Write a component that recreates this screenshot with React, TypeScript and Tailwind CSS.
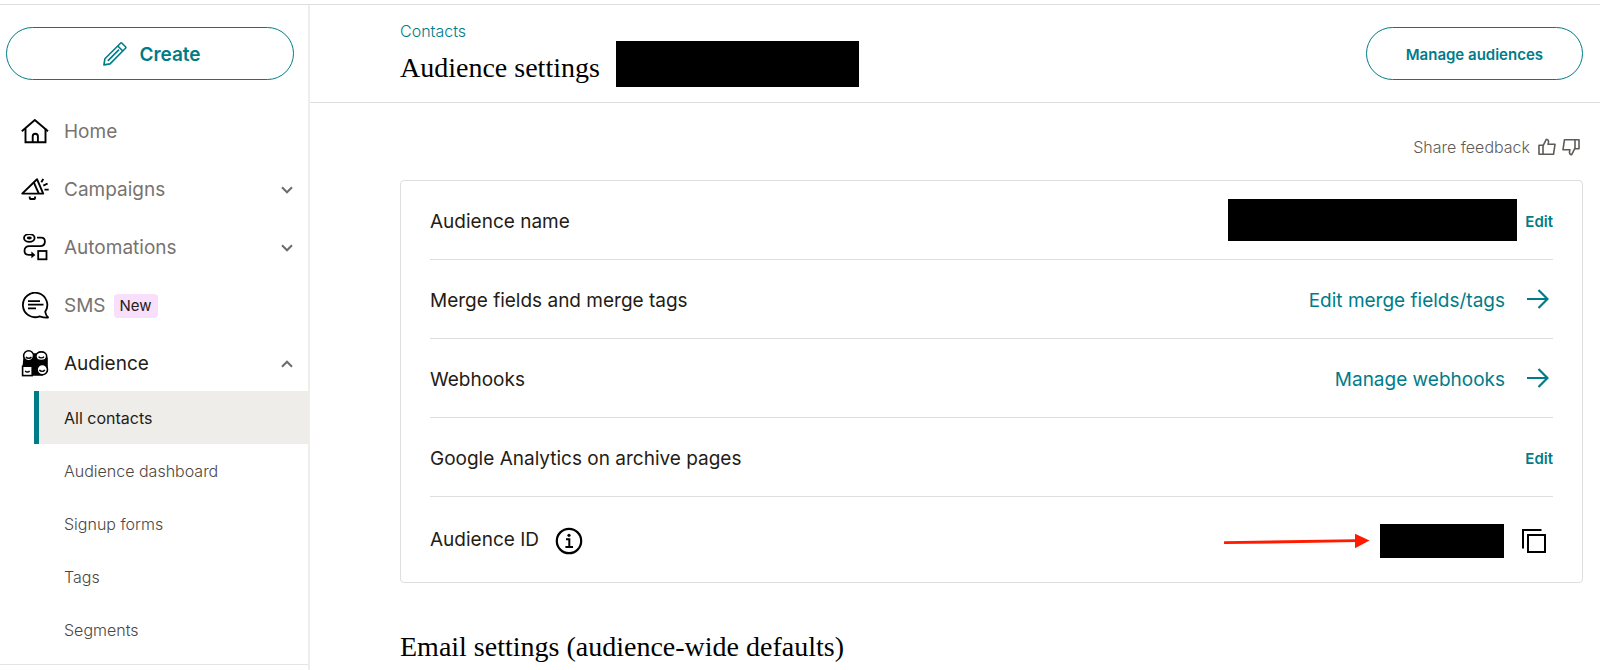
import React from 'react';

interface IconProps {
    className?: string;
}

const HomeIcon: React.FC<IconProps> = ({ className }) => (
    <svg viewBox="0 0 28 28" className={className} fill="none" stroke="currentColor" strokeWidth="1.9" aria-hidden="true">
        <path d="M.8 13.2 13.8 2l13.2 11.2" strokeLinejoin="round" />
        <path d="M4.5 10.5v13.8h20V10.5" />
        <path d="M11.7 24.3v-6a2.6 2.6 0 0 1 5.2 0v6" />
    </svg>
);

const CampaignsIcon: React.FC<IconProps> = ({ className }) => (
    <svg viewBox="0 0 28 28" className={className} fill="none" stroke="currentColor" strokeWidth="1.9" strokeLinejoin="round" aria-hidden="true">
        <path d="M1.2 17.6 16 3.2l6.2 14.4z" />
        <path d="m12.8 6.4 5 11.2" />
        <path d="M8.7 20.4v1a1.6 1.6 0 0 0 1.6 1.6h2.2a1.6 1.6 0 0 0 1.6-1.6v-1" />
        <path d="m20.3 6.2 2-3.2M22.3 9.7l4.3-2.2M23.5 13.6h4.2" />
    </svg>
);

const AutomationsIcon: React.FC<IconProps> = ({ className }) => (
    <svg viewBox="0 0 28 28" className={className} fill="none" stroke="currentColor" strokeWidth="1.8" aria-hidden="true">
        <ellipse cx="8.3" cy="4" rx="5.3" ry="3.9" />
        <ellipse cx="8.3" cy="4" rx="1.6" ry=".5" />
        <path d="M16 3.6h4.2c2.4 0 3.7 1.6 3.7 4 0 3-1.6 4.6-5 4.6H8.4c-3.2 0-4.9 1.8-4.9 4.5s1.6 4.2 4.3 4.2H11" />
        <path d="m10.4 17.6 4 3.3-4 3.3z" fill="currentColor" stroke="none" />
        <rect x="17.2" y="17" width="8.3" height="8.3" />
    </svg>
);

const SmsIcon: React.FC<IconProps> = ({ className }) => (
    <svg viewBox="0 0 28 28" className={className} fill="none" stroke="currentColor" strokeWidth="1.8" strokeLinejoin="round" aria-hidden="true">
        <path d="M24.2 19.8A12.2 12.2 0 1 0 18.6 24.3c2.8.9 5.4 1.4 8.5 1.2-1.6-1.5-2.5-3.4-2.9-5.7z" />
        <path d="M7 9.2h12M7 12.7h15.5M7 16.4h8" />
    </svg>
);

const AudienceIcon: React.FC<IconProps> = ({ className }) => (
    <svg viewBox="0 0 28 28" className={className} fill="none" stroke="currentColor" strokeWidth="1.6" aria-hidden="true">
        <path d="M3 9 8 4h14l4 4v13l-5 4H8l-6-4z" fill="currentColor" />
        <circle cx="7.6" cy="5.8" r="5" fill="white" />
        <ellipse cx="20.3" cy="6.2" rx="5.4" ry="4.3" fill="white" />
        <rect x="1.6" y="16.2" width="9.6" height="9.4" fill="white" />
        <circle cx="21.3" cy="19.6" r="5.2" fill="white" />
        <path d="M5 6.8c1.2 2 4.2 2 5.4 0M17.6 6.6c1.2 1.7 4.2 1.7 5.4 0M4.2 20.8c1 1.6 3.4 1.6 4.4 0M18.4 19.9c1.2 2 4.2 2 5.4 0" strokeWidth="1.4" />
    </svg>
);

const PencilIcon: React.FC<IconProps> = ({ className }) => (
    <svg viewBox="0 0 24 24" className={className} fill="none" stroke="currentColor" strokeWidth="1.6" strokeLinejoin="round" aria-hidden="true">
        <path d="m.9 22.9 1-6.2L17.5 1.3c.5-.5 1-.5 1.5 0l3.500 3.500c.5.5.5 1 0 1.5L7 21.900z" />
        <path d="m14.800 4 5 5M4.800 18.900 16 7.700" strokeWidth="1.700" />
    </svg>
);

const ChevronIcon: React.FC<IconProps> = ({ className }) => (
    <svg viewBox="0 0 12 8" className={className} fill="none" stroke="currentColor" strokeWidth="2" aria-hidden="true">
        <path d="m1 1.3 5 5 5-5" />
    </svg>
);

const ThumbIcon: React.FC<IconProps> = ({ className }) => (
    <svg viewBox="0 0 18 18" className={className} fill="none" stroke="currentColor" strokeWidth="1.6" strokeLinejoin="round" aria-hidden="true">
        <path d="M1 7.2h4v9.1H1z" />
        <path d="M5 7.8 8.3 1.3c1.7.2 2.5 1.5 2.2 3.1L10 6.300h7l-1.500 10H5" />
    </svg>
);

const ArrowRightIcon: React.FC<IconProps> = ({ className }) => (
    <svg viewBox="0 0 22 20" className={className} fill="none" stroke="currentColor" strokeWidth="2.2" aria-hidden="true">
        <path d="M0 10h20.500M11.500 1l9 9-9 9" />
    </svg>
);

const InfoIcon: React.FC<IconProps> = ({ className }) => (
    <svg viewBox="0 0 28 28" className={className} fill="none" stroke="currentColor" strokeWidth="2.2" aria-hidden="true">
        <circle cx="14" cy="14" r="12.2" />
        <path d="M11 12.300h3.300v7.500M10.400 19.900h7.600" strokeWidth="2" />
        <circle cx="14" cy="8.3" r="1.6" fill="currentColor" stroke="none" />
    </svg>
);

const CopyIcon: React.FC<IconProps> = ({ className }) => (
    <svg viewBox="0 0 24 24" className={className} fill="none" stroke="currentColor" strokeWidth="2" aria-hidden="true">
        <path d="M1 19.500V1h18.500" />
        <rect x="6" y="6" width="17" height="17" />
    </svg>
);

const RedArrow: React.FC<IconProps> = ({ className }) => (
    <svg viewBox="0 0 146 16" className={className} aria-hidden="true">
        <path d="m1 9.700 132-2" stroke="#ff1a00" strokeWidth="2.8" strokeLinecap="round" />
        <path d="m131 .8 14.500 6.700L131 15.200z" fill="#ff1a00" />
    </svg>
);

const navItems = [
    { label: 'Home', Icon: HomeIcon, expandable: false },
    { label: 'Campaigns', Icon: CampaignsIcon, expandable: true },
    { label: 'Automations', Icon: AutomationsIcon, expandable: true },
    { label: 'SMS', Icon: SmsIcon, expandable: false, badge: 'New' },
    { label: 'Audience', Icon: AudienceIcon, expandable: true, open: true },
];

const audienceItems = ['All contacts', 'Audience dashboard', 'Signup forms', 'Tags', 'Segments'];

const Sidebar: React.FC = () => (
    <aside className="w-[310px] shrink-0 border-r-2 border-[#efeeec]">
        <div className="border-b border-[#e6e5e3] pt-[22px] pb-2">
            <div className="pl-1.5 pr-3.5">
                <button className="flex h-[53px] w-full items-center justify-center gap-3 rounded-full border border-[#007c89] pl-1 text-[19px] font-semibold text-[#007c89]">
                    <PencilIcon className="size-6" />
                    <span className="pt-1">Create</span>
                </button>
            </div>
            <nav className="pt-[25px]">
                <ul className="flex flex-col gap-1">
                    {navItems.map(({ label, Icon, expandable, badge, open }) => (
                        <li key={label}>
                            <a href="#" className={`flex h-[54px] items-center pl-[21px] pr-[15px] text-[19px] ${open ? 'text-[#241c15]' : 'text-[#77736f]'}`}>
                                <Icon className="mr-[15px] size-7 text-black" />
                                <span>{label}</span>
                                {badge && (
                                    <span className="ml-2 rounded-sm bg-[#f8dffb] px-1.5 text-[15px] leading-6 text-[#241c15]">{badge}</span>
                                )}
                                {expandable && <ChevronIcon className={`ml-auto w-3 text-[#6f6b67] ${open ? 'rotate-180' : ''}`} />}
                            </a>
                        </li>
                    ))}
                </ul>
                <ul className="pl-[34px]">
                    {audienceItems.map((label, i) => (
                        <li key={label}>
                            <a
                                href="#"
                                className={`flex h-[53px] items-center border-l-5 pl-[25px] text-base ${
                                    i === 0 ? 'border-[#007c89] bg-[#eeedea] text-[#241c15]' : 'border-transparent font-light text-[#4c4742]'
                                }`}
                            >
                                {label}
                            </a>
                        </li>
                    ))}
                </ul>
            </nav>
        </div>
    </aside>
);

interface SettingRowProps {
    label: string;
    children: React.ReactNode;
}

const SettingRow: React.FC<SettingRowProps> = ({ label, children }) => (
    <div className="flex h-[79px] items-center justify-between border-b border-[#dededc]">
        <span className="pt-1">{label}</span>
        <div className="flex items-center">{children}</div>
    </div>
);

const EditButton: React.FC = () => <button className="pt-1 text-[15px] font-semibold text-[#007c89]">Edit</button>;

const RowLink: React.FC<{ label: string }> = ({ label }) => (
    <a href="#" className="flex items-center gap-[22px] pr-1 text-[#007c89]">
        <span className="pt-1">{label}</span>
        <ArrowRightIcon className="w-[22px]" />
    </a>
);

const App: React.FC = () => (
    <div className="flex min-h-screen flex-col bg-white pt-1 font-['Inter','Liberation_Sans',sans-serif] text-[#241c15]">
        <div className="flex grow border-t border-[#dededc]">
            <Sidebar />
            <main className="min-w-0 grow">
                <header className="flex items-start justify-between border-b border-[#dededc] pr-[17px] pb-[15px] pl-[90px]">
                    <div className="pt-4">
                        <a href="#" className="block text-base leading-5 font-light text-[#007c89]">Contacts</a>
                        <div className="flex items-center gap-4">
                            <h1 className="pt-2 font-['Liberation_Serif',serif] text-[28px] leading-8 text-black">Audience settings</h1>
                            <div className="h-[46px] w-[243px] bg-black" />
                        </div>
                    </div>
                    <button className="mt-[22px] h-[53px] rounded-full border border-[#007c89] px-[39px] pt-1 text-[15px] font-semibold text-[#007c89]">
                        Manage audiences
                    </button>
                </header>

                <div className="pr-[17px] pl-[90px]">
                    <div className="flex items-center justify-end gap-2 pt-8 pr-[3px] pb-[21px] text-base font-light text-[#5f5b57]">
                        <span>Share feedback</span>
                        <div className="flex gap-1.5">
                            <button aria-label="Good">
                                <ThumbIcon className="size-[18px]" />
                            </button>
                            <button aria-label="Bad">
                                <ThumbIcon className="size-[18px] rotate-180" />
                            </button>
                        </div>
                    </div>

                    <section className="rounded-sm border border-[#dededc] px-[29px] text-[19px]">
                        <SettingRow label="Audience name">
                            <div className="mr-2 h-[42px] w-[289px] bg-black" />
                            <EditButton />
                        </SettingRow>
                        <SettingRow label="Merge fields and merge tags">
                            <RowLink label="Edit merge fields/tags" />
                        </SettingRow>
                        <SettingRow label="Webhooks">
                            <RowLink label="Manage webhooks" />
                        </SettingRow>
                        <SettingRow label="Google Analytics on archive pages">
                            <EditButton />
                        </SettingRow>
                        <div className="flex h-[85px] items-center justify-between pt-0.5">
                            <div className="flex items-center gap-4">
                                <span>Audience ID</span>
                                <button aria-label="About audience ID" className="text-black">
                                    <InfoIcon className="size-7" />
                                </button>
                            </div>
                            <div className="flex items-center pr-[7px]">
                                <RedArrow className="mr-2.5 w-[146px]" />
                                <div className="mr-[18px] h-[34px] w-[124px] bg-black" />
                                <button aria-label="Copy audience ID" className="text-black">
                                    <CopyIcon className="size-6" />
                                </button>
                            </div>
                        </div>
                    </section>

                    <h2 className="pt-12 font-['Liberation_Serif',serif] text-[28px] leading-8 text-black">Email settings (audience-wide defaults)</h2>
                </div>
            </main>
        </div>
    </div>
);

export default App;
